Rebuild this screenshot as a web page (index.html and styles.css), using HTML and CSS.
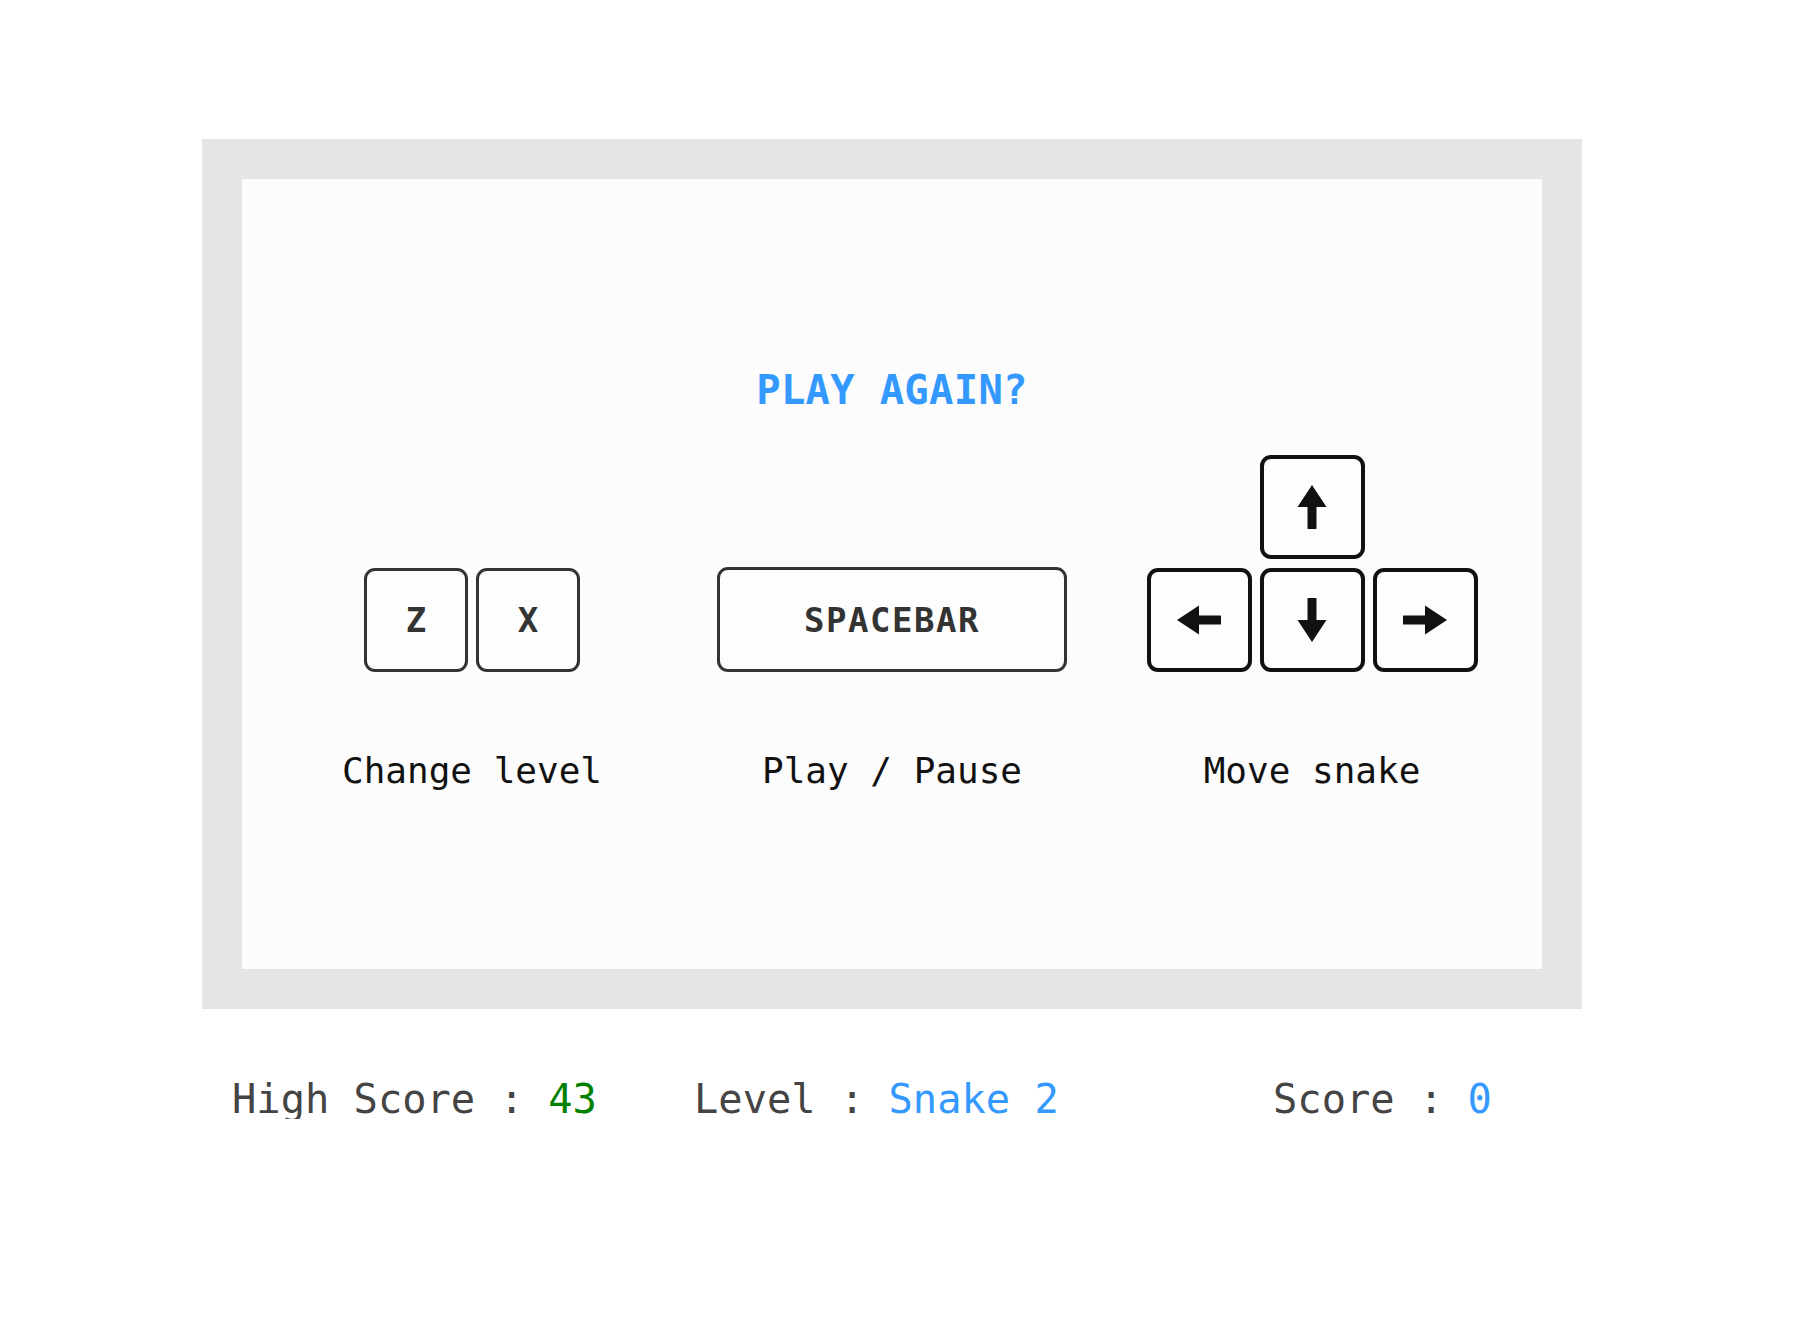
FILE: index.html
```html
<!DOCTYPE html>
<html lang="en">
<head>
<meta charset="utf-8">
<title>Snake</title>
<link rel="stylesheet" href="styles.css">
</head>
<body>
<div class="page">
  <div class="board">
    <div class="screen">
      <h1 class="title">PLAY AGAIN?</h1>
      <div class="controls">
        <div class="control">
          <div class="keys">
            <div class="key-row">
              <div class="key">Z</div>
              <div class="key">X</div>
            </div>
          </div>
          <div class="label">Change level</div>
        </div>
        <div class="control">
          <div class="keys">
            <div class="key key-wide">SPACEBAR</div>
          </div>
          <div class="label">Play / Pause</div>
        </div>
        <div class="control">
          <div class="keys">
            <div class="arrows">
              <div class="key key-arrow arrow-up">
                <svg width="44" height="44" viewBox="0 0 44 44"><path d="M22 0 L36.5 22 L26.5 22 L26.5 43 Q26.5 44.5 25 44.5 L19 44.5 Q17.5 44.5 17.5 43 L17.5 22 L7.5 22 Z" fill="#111"/></svg>
              </div>
              <div class="key key-arrow arrow-left">
                <svg width="44" height="44" viewBox="0 0 44 44"><path d="M0 22 L22 7.5 L22 17.5 L43 17.5 Q44.5 17.5 44.5 19 L44.5 25 Q44.5 26.5 43 26.5 L22 26.5 L22 36.5 Z" fill="#111"/></svg>
              </div>
              <div class="key key-arrow arrow-down">
                <svg width="44" height="44" viewBox="0 0 44 44"><path d="M22 44 L36.5 22 L26.5 22 L26.5 1 Q26.5 -0.5 25 -0.5 L19 -0.5 Q17.5 -0.5 17.5 1 L17.5 22 L7.5 22 Z" fill="#111"/></svg>
              </div>
              <div class="key key-arrow arrow-right">
                <svg width="44" height="44" viewBox="0 0 44 44"><path d="M44 22 L22 7.5 L22 17.5 L1 17.5 Q-0.5 17.5 -0.5 19 L-0.5 25 Q-0.5 26.5 1 26.5 L22 26.5 L22 36.5 Z" fill="#111"/></svg>
              </div>
            </div>
          </div>
          <div class="label">Move snake</div>
        </div>
      </div>
    </div>
  </div>
  <div class="stats">
    <div class="stat">High Score : <span class="green">43</span></div>
    <div class="stat">Level : <span class="blue">Snake 2</span></div>
    <div class="stat">Score : <span class="blue">0</span></div>
  </div>
</div>
</body>
</html>
```

FILE: styles.css
```css
* {
  box-sizing: border-box;
}

html, body {
  margin: 0;
  padding: 0;
  background: #ffffff;
}

body {
  font-family: "DejaVu Sans Mono", "Liberation Mono", monospace;
  color: #111;
}

.page {
  padding: 139px 0 0 202px;
}

.board {
  width: 1380px;
  height: 870px;
  background: #e5e5e5;
  padding: 40px;
}

.screen {
  width: 1300px;
  height: 790px;
  background: #fcfcfc;
  padding: 191px 20px 0;
}

.title {
  margin: 0;
  font-size: 40.5px;
  line-height: 40px;
  font-weight: bold;
  color: #3399ff;
  text-align: center;
  letter-spacing: 0.3px;
}

.controls {
  margin-top: 45px;
  display: grid;
  grid-template-columns: repeat(3, 420px);
}

.control {
  display: flex;
  flex-direction: column;
  align-items: center;
}

.keys {
  height: 217px;
  display: flex;
  align-items: flex-end;
  justify-content: center;
}

.key-row {
  display: flex;
  gap: 8px;
}

.key {
  width: 104px;
  height: 104px;
  border: 3px solid #333;
  border-radius: 11px;
  background: #fdfdfd;
  display: flex;
  align-items: center;
  justify-content: center;
  font-weight: bold;
  font-size: 34px;
  line-height: 34px;
  color: #333;
}

.key-wide {
  width: 350px;
  height: 105px;
  letter-spacing: 1.5px;
}

.arrows {
  display: grid;
  grid-template-columns: repeat(3, 105px);
  grid-template-rows: 104px 104px;
  column-gap: 8px;
  row-gap: 9px;
}

.key-arrow {
  width: 105px;
  height: 104px;
  border: 4px solid #111;
  border-radius: 11px;
}

.arrow-up {
  grid-column: 2;
  grid-row: 1;
}

.arrow-left {
  grid-column: 1;
  grid-row: 2;
}

.arrow-down {
  grid-column: 2;
  grid-row: 2;
}

.arrow-right {
  grid-column: 3;
  grid-row: 2;
}

.label {
  margin-top: 81px;
  font-size: 36px;
  line-height: 36px;
  color: #111;
  white-space: pre;
}

.stats {
  margin-top: 70px;
  padding-left: 30px;
  display: grid;
  grid-template-columns: 462px 579px auto;
  font-size: 40.4px;
  line-height: 40px;
  color: #444;
}

.stat {
  white-space: pre;
}

.green {
  color: #008000;
}

.blue {
  color: #3399ff;
}
```
